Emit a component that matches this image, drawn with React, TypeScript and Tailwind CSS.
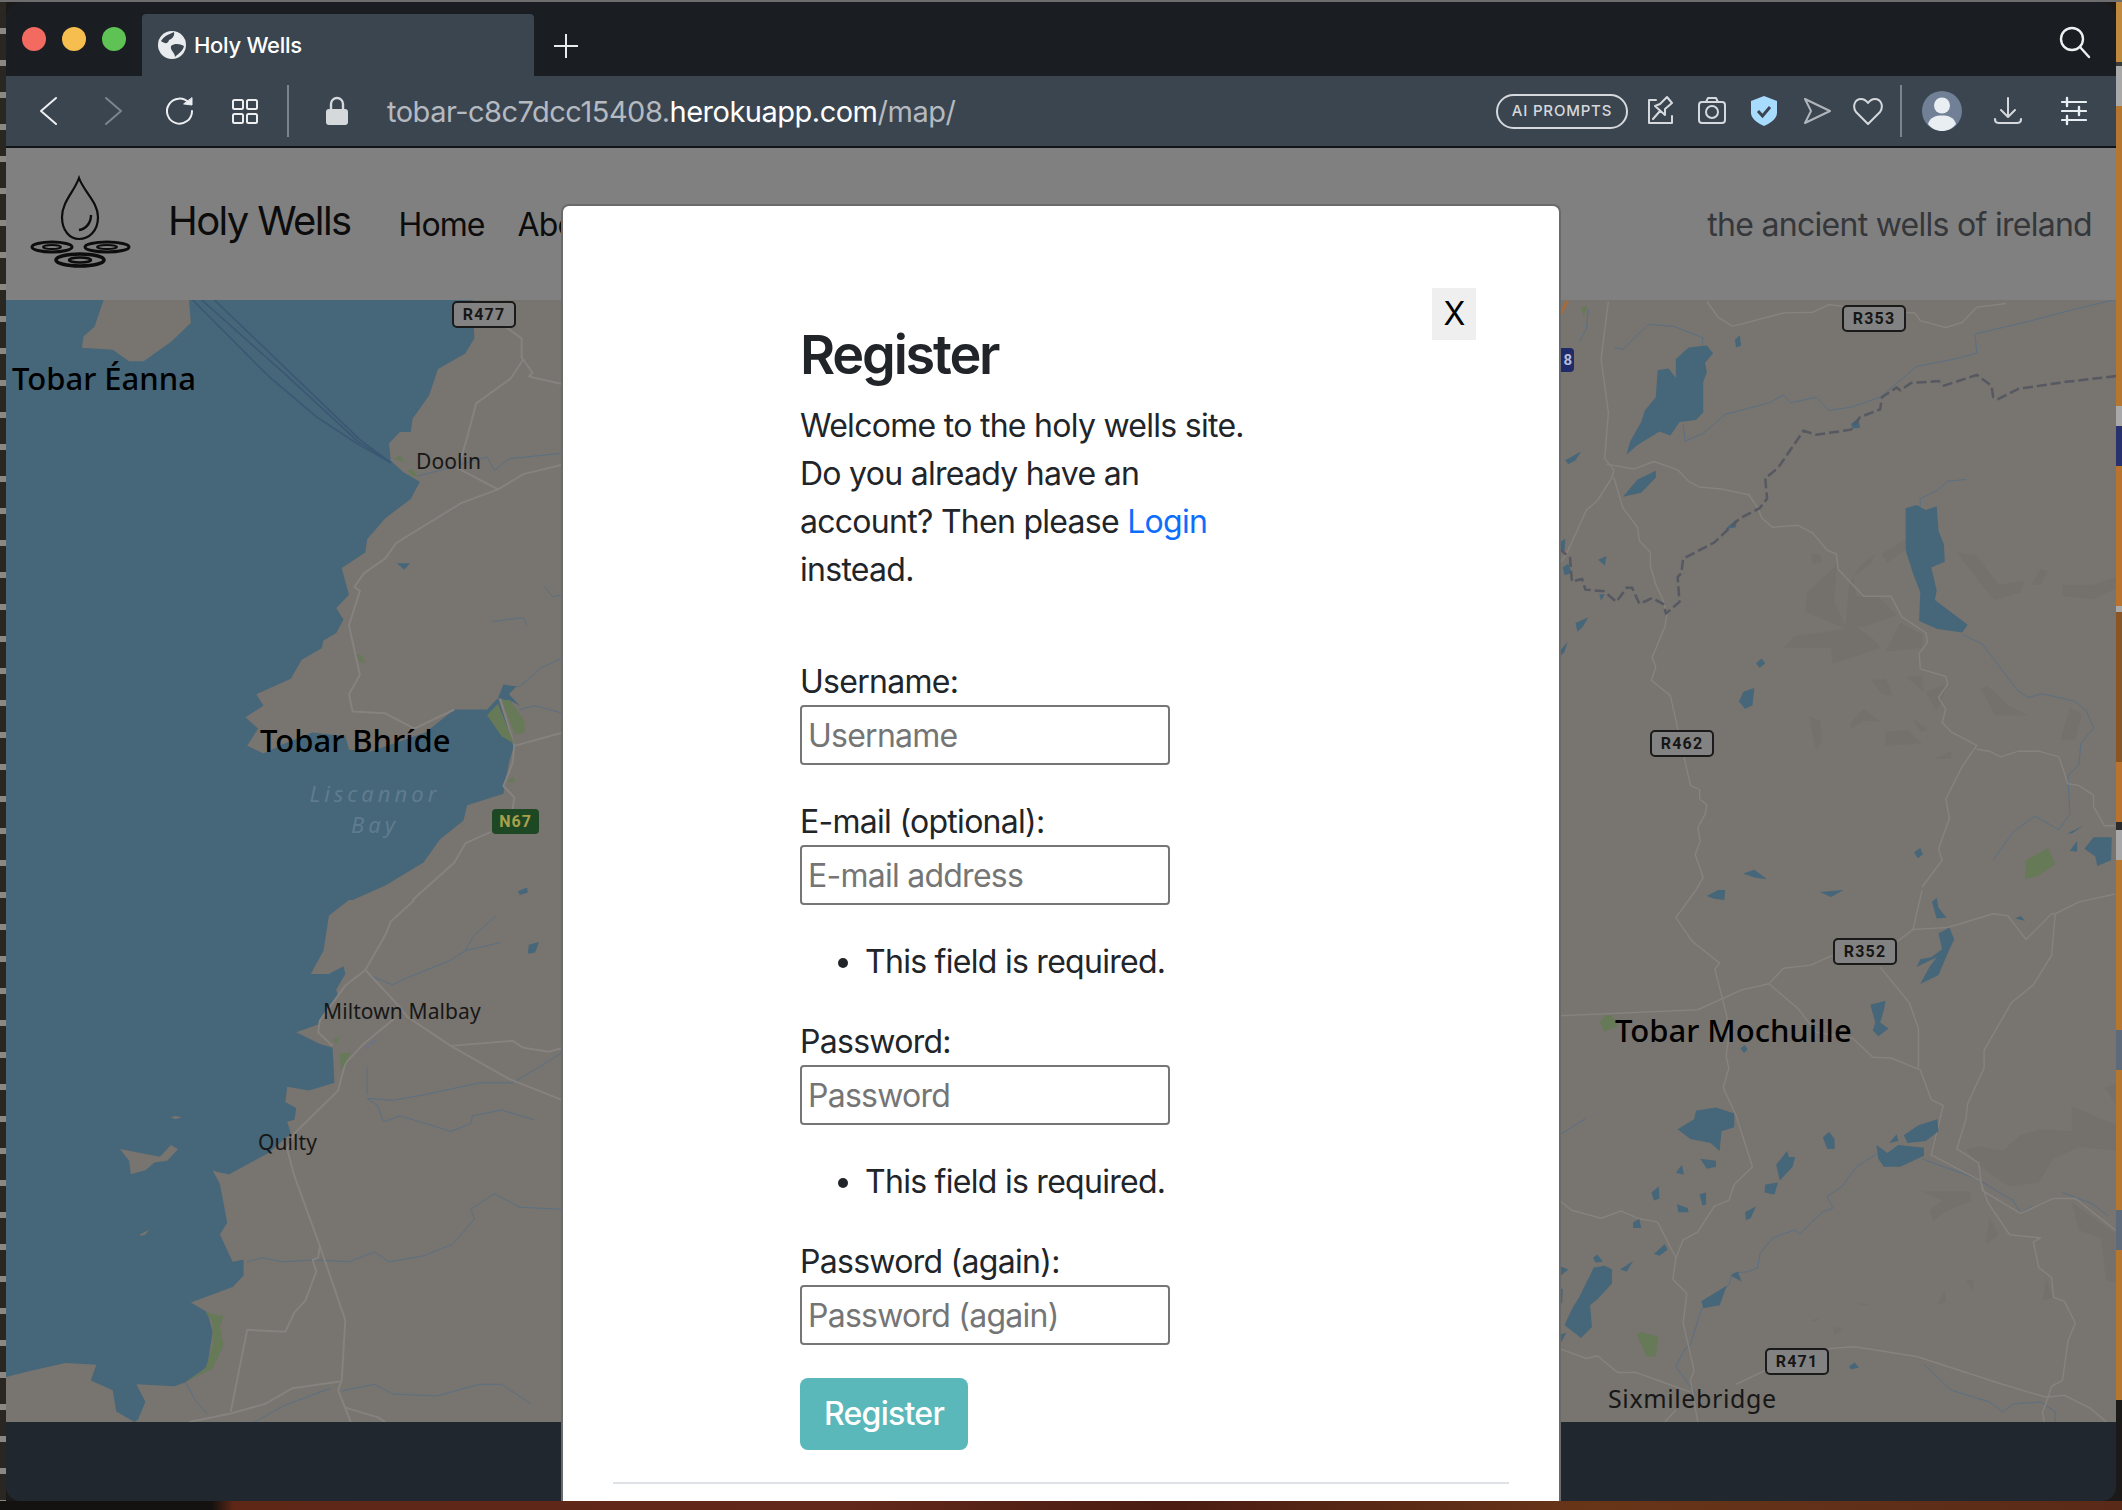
import type { ReactNode } from "react";

const SANS = "font-['Inter','Liberation_Sans',sans-serif]";

// map shapes are traced in crop coordinates, each group below scales one crop back to the page
const waterNorth =
  "0,0 1300,0 1305,100 1280,140 1205,180 1180,250 1135,310 1130,345 1100,345 1070,375 1075,420 1110,450 1155,475 1130,520 1060,570 1010,625 1005,660 940,700 960,770 925,805 945,835 925,870 890,890 885,910 830,940 800,990 705,1030 725,1060 675,1090 710,1120 680,1165 725,1185 780,1160 860,1130 950,1140 960,1175 1020,1180 1170,1130 1250,1070 1340,1070 1370,1040 1415,1160 1400,1210 1385,1290 1285,1320 1275,1360 1210,1410 1165,1470 1060,1530 970,1568 0,1568";
const waterSouth =
  "0,0 960,0 905,40 890,130 855,190 905,190 945,170 950,190 925,230 930,250 885,300 875,320 815,340 880,370 915,380 920,470 850,490 790,480 785,520 815,535 810,565 790,570 800,600 740,650 630,705 600,700 585,695 605,730 625,830 605,860 640,930 670,925 670,965 640,995 525,1035 570,1060 585,1110 570,1200 510,1240 480,1250 375,1245 400,1290 380,1335 370,1342 320,1315 310,1260 250,1235 265,1195 180,1190 85,1210 0,1230";

const northIslands = [
  "285,0 520,0 525,60 470,110 395,160 355,160 310,130 225,125 230,95 260,70",
];
const northLakes = [
  "1370,1040 1385,1005 1420,1010 1400,1030 1430,1060 1410,1050",
  "1092,688 1128,688 1112,705",
  "1425,1545 1450,1535 1452,1548 1430,1555",
];
const northGreens = [
  "1085,415 1100,405 1115,425",
  "1120,445 1135,442 1148,460 1135,460",
  "980,925 995,930 1005,950 990,945",
  "1340,1085 1370,1055 1415,1160 1380,1140",
  "1380,1045 1402,1045 1443,1100 1443,1130 1417,1135",
  "1395,1260 1410,1245 1418,1258",
];
const northRoads = [
  "M1390,70 L1435,100 L1435,150 L1465,190 L1455,200 L1549,220",
  "M1440,155 L1405,205 L1310,270 L1285,360 L1260,440 L1370,495",
  "M1549,430 L1440,455 L1370,495 L1270,530 L1090,635 L1060,675 L1000,715 L975,750 L990,760 L960,850 L990,980 L960,1030 L970,1075 L1060,1080 L1140,1120 L1250,1070",
  "M1549,1130 L1415,1165 L1375,1040 M1415,1165 L1410,1210 L1385,1270 L1415,1300 L1410,1330",
  "M1350,1390 L1280,1420 L1250,1470 L1135,1568",
];
const northRivers = [
  "M1150,460 L1230,440 L1340,410 L1360,445 L1400,415 L1549,400",
  "M1355,840 L1440,830 L1450,850",
  "M1495,745 L1520,775 L1549,770",
  "M1549,935 L1490,960 L1430,1010 L1400,1010",
  "M1430,1070 L1470,1060 L1549,1080",
];
const ferryLines = [
  "M530,0 L740,200 L870,305 L990,380 L1075,425",
  "M555,0 L780,190 L985,370 L1075,425",
  "M590,0 L990,365 L1075,425",
];

const southIslands = [
  "330,640 440,660 470,630 490,640 460,670 425,675 400,695 360,705 355,670",
  "470,558 485,555 500,560 480,563",
  "385,860 410,848 400,860 388,864",
];
const southGreens = [
  "565,1060 615,1070 605,1095 615,1145 585,1205 510,1240 565,1205 585,1145 585,1085",
  "935,395 965,392 938,438",
  "915,360 935,350 925,370",
];
const southRoads = [
  "M1140,0 L1075,55 L1060,90 L1005,180 L1090,265 L1120,300 L1240,375 L1400,460 L1549,515",
  "M1005,180 L950,220 L880,310 L875,340 L915,375",
  "M1085,305 L1000,370 L950,420 L930,490 L810,600 L790,640 L810,710 L880,890 L950,1080 L940,1235 L930,1260 L965,1342",
  "M880,890 L875,920 L860,925 L870,955 L840,1030 L810,1060 L785,1110 L680,1105 L635,1315",
  "M1240,375 L1410,362 L1440,380 L1510,390 L1549,380",
  "M520,1342 L635,1320 L730,1295 L805,1255 L935,1238",
  "M950,1305 L1040,1330 L1060,1342",
];
const southRivers = [
  "M1365,40 L1305,90 L1280,130 L1240,155 L1120,200 L1080,218 L1020,195",
  "M1375,110 L1280,130",
  "M1549,390 L1500,420 L1410,470 L1320,470 L1170,500 L1080,515 L1010,510 L1040,530 L1055,570 L1100,555 L1190,580 L1240,595 L1295,575 L1300,555 L1380,540 L1470,565",
  "M1010,430 L1010,500",
  "M1545,795 L1430,790 L1360,755 L1295,795 L1305,820 L1245,885 L1165,915 L1070,930 L1030,905 L960,930 L870,925 L780,930 L720,920 L680,930",
  "M940,1262 L1030,1245 L1080,1270 L1200,1275 L1320,1245 L1380,1245 L1460,1295",
  "M510,1240 L540,1290 L570,1320",
  "M700,1342 L780,1300 L910,1255",
];

const eastHills = [
  "715,690 740,690 745,712 720,715",
  "700,840 705,790 785,720 780,815 810,880 820,770 850,720 890,690 880,715 830,750 840,800 900,800 950,850 860,880 840,880 820,890",
  "640,935 670,905 780,890 840,880 890,915 905,935 830,960 775,975 770,935",
  "920,945 960,870 1020,900 1020,935",
  "1115,685 1170,695 1230,770 1300,760 1290,790 1220,810 1190,780",
  "1320,770 1345,730 1365,735 1345,770",
  "1405,770 1490,770 1550,750 1550,780 1490,808 1405,800",
  "910,690 975,650 975,680 925,712",
  "880,1020 920,1015 940,1060 910,1055",
  "975,1010 1020,1008 1025,1050",
  "1030,1050 1090,1030 1060,1100",
  "1180,1040 1200,1035 1255,1085 1310,1112 1220,1112",
  "1425,1090 1458,1110 1440,1175 1400,1175",
  "710,1115 740,1125 745,1175 730,1205",
  "825,1130 860,1095 910,1130 860,1125 825,1148",
  "920,1155 980,1150 1020,1185 920,1190",
  "995,1120 1035,1150 1015,1155",
  "1055,1225 1100,1205 1100,1225",
];
const eastRoads = [
  "M160,30 L140,180 L160,320 L150,440 L175,470 L170,490 L130,550 L100,575 L45,690 L30,710",
  "M175,490 L200,570 L240,620 L245,655 L275,685 L275,720 L290,770 L310,810 L320,850 L315,880 L280,960 L290,985 L278,1020 L330,1060 L385,1295 L410,1305 L410,1330 L430,1345 L425,1370 L405,1405 L412,1440 L398,1475 L420,1535 L400,1568",
  "M155,455 L230,468 L285,448 L350,470 L380,500 L410,515 L470,520 L545,535 L570,570 L580,595 L610,620 L680,615 L720,635 L760,680 L785,690 L790,730 L860,800 L935,800 L965,855 L1030,895 L1035,920 L1012,950 L1015,990 L1085,1010 L1090,1030 L1065,1065 L1085,1095 L1075,1130 L1100,1155 L1170,1190 L1130,1245 L1085,1330 L1095,1380 L1065,1460 L1075,1490 L1020,1560",
  "M1170,1200 L1205,1205 L1235,1220 L1285,1205 L1340,1205 L1395,1220 L1420,1290 L1450,1295 L1490,1320 L1490,1350 L1520,1400 L1550,1400",
  "M430,30 L460,70 L500,95 L640,60 L720,58 L765,38 L900,55 L1000,60 L1015,80 L1085,98 L1130,85 L1170,45 L1250,35",
];
const eastRivers = [
  "M178,150 L200,155 L270,90 L340,95 L420,125 L415,150",
  "M365,350 L370,395 L420,375 L480,325 L600,295 L640,275 L660,295 L730,280 L765,315 L830,305 L905,280 L1005,200 L1110,180 L1170,165 L1165,115 L1300,85 L1440,50 L1550,25",
  "M1015,565 L1015,545 L1060,525 L1090,500 L1140,495",
  "M1130,900 L1185,925 L1280,1045 L1310,1065 L1350,1055 L1440,1075 L1470,1100 L1490,1145 L1455,1185 L1450,1240 L1420,1270 L1425,1370 L1395,1410 L1330,1375 L1270,1415 L1215,1490",
  "M105,50 L100,100 L80,135",
];
const countyBorder =
  "M1552,225 L1415,240 L1285,258 L1228,285 L1215,280 L1210,250 L1170,222 L1080,250 L1065,238 L990,243 L960,262 L950,255 L910,280 L905,312 L850,332 L825,365 L730,378 L695,368 L625,465 L590,492 L595,545 L575,570 L520,597 L450,660 L365,702 L360,740 L350,750 L355,815 L318,845 L310,820 L280,805 L245,820 L225,778 L210,778 L182,815 L148,787 L97,783 L88,755 L60,762 L55,700 L25,675";
const eastLakes = [
  "210,430 220,395 250,345 260,315 290,280 295,210 325,205 345,230 345,180 380,150 430,145 447,165 425,190 430,215 420,240 420,320 400,340 355,345 330,380 300,370 240,405",
  "975,570 1005,562 1030,575 1060,565 1065,630 1080,665 1082,710 1045,725 1060,785 1055,810 1145,875 1130,895 1060,885 1012,865 1015,790 995,740 975,680",
  "507,130 520,118 524,145 510,150",
  "42,445 85,422 70,445 50,455",
  "200,540 240,495 290,472 290,490 250,530",
  "132,705 155,695 150,720",
  "70,870 105,855 90,880 75,893",
  "25,945 48,920 40,945 25,960",
  "35,725 50,715 60,740 40,745",
  "25,660 42,650 40,680 25,685",
  "480,625 510,600 510,620",
  "825,350 845,335 850,360 830,362",
  "135,795 150,795 140,812",
  "565,975 580,963 590,975 575,988",
  "518,1075 530,1050 560,1040 555,1085 535,1095",
  "998,1470 1015,1458 1022,1475 1008,1485",
  "530,1525 560,1515 595,1540 560,1535",
  "1418,1420 1462,1400 1430,1420",
  "1425,1465 1445,1440 1445,1468",
  "1465,1460 1490,1430 1540,1430 1538,1490 1500,1505 1495,1480",
];
const eastGreens = [
  "1305,1490 1365,1458 1385,1500 1340,1530 1302,1540",
  "85,45 103,42 92,70",
];

const lowerHills = [
  "1140,655 1180,648 1240,660 1290,620 1340,605 1430,610 1430,548 1568,600 1568,660 1450,650 1380,680 1340,740 1260,750 1210,720 1170,690",
  "1520,500 1550,490 1550,540",
  "1430,790 1550,870 1550,990 1525,990 1510,880 1450,860",
  "1020,762 1150,762 1155,785 1090,810 1050,835 1040,810 1075,785",
  "1195,890 1205,830 1230,870 1200,895",
  "1350,1040 1360,985 1380,1030",
  "1060,1050 1082,1012 1085,1040",
  "1140,985 1160,985 1160,1015",
  "840,1045 875,1048 850,1050",
  "710,1092 740,1080 730,1090",
  "775,1105 805,1110 780,1125",
];
const lowerRoads = [
  "M400,0 L345,70 L390,130 L465,185 L452,200 L485,320 L490,370 L483,420 L490,450 L475,500 L510,570 L555,700 L505,745 L490,785 L450,800 L405,865 L365,885 L345,930 L337,985 L375,1020 L365,1095 L395,1215 L385,1240 L405,1345",
  "M25,318 L405,303 L525,253 L600,237 L640,198 L715,190 L775,165",
  "M600,237 L680,300 L730,360 L830,375 L885,423 L935,425 L1015,455 L1045,530 L1078,545 L1045,670 L1180,735 L1200,790 L1260,872 L1345,880 L1325,890 L1340,955 L1375,980 L1380,1030 L1410,1040 L1440,1095 L1420,1140 L1405,1240 L1375,1255 L1365,1285 L1350,1320 L1355,1345",
  "M945,135 L995,100 L1020,0",
  "M995,100 L1090,95 L1215,60 L1255,65 L1305,125 L1375,60 L1385,60 L1375,165 L1325,240 L1265,285 L1190,405 L1190,450 L1145,540 L1140,580 L1115,655 L1175,690 L1185,760 L1290,818 L1380,780 L1440,780 L1550,860",
  "M905,195 L985,285 L1010,350 L1010,450",
  "M1385,60 L1450,30 L1550,10",
  "M25,785 L60,810 L140,830 L195,812 L240,830 L295,840 L345,930",
  "M25,1160 L100,1185 L130,1178 L185,1220 L235,1220 L310,1245 L385,1270",
  "M510,1250 L590,1215 M760,1160 L835,1155 L1005,1180 L1240,1250 L1360,1283 L1410,1278 L1480,1310 L1525,1345",
  "M315,1345 L345,1315",
];
const lowerRivers = [
  "M25,620 L97,578",
  "M900,665 L840,700 L800,750 L760,775 L775,805 L745,815 L685,870 L670,860 L610,880 L575,920 L570,955 L545,965 L500,970 L490,1000 L415,1060 L385,1150 L370,1160 L345,1205 L400,1275",
  "M1020,680 L1170,730 L1240,770 L1270,785 L1290,818 L1320,800",
  "M1405,765 L1490,795 L1530,825",
  "M1025,1200 L1100,1265 L1205,1295 L1240,1320 L1270,1300 L1345,1295 L1385,1320 L1385,1345",
];
const lowerLakes = [
  "350,605 395,580 400,558 455,550 505,565 505,600 470,610 465,660 440,640 385,630",
  "412,680 455,685 455,700 430,705",
  "345,715 362,695 367,720",
  "278,765 298,750 300,780 285,785",
  "410,770 428,765 428,795 418,798",
  "348,795 378,805 380,815 352,815",
  "228,840 245,832 250,855 228,855",
  "285,920 315,895 322,910 300,925",
  "535,815 565,800 550,830 537,835",
  "590,745 625,740 615,770 588,765",
  "620,695 650,660 655,675 672,675 665,700 630,735",
  "748,625 765,612 780,630 780,655 760,655",
  "895,645 925,665 955,645 1025,652 1025,672 960,700 915,700 900,680",
  "970,620 1010,595 1062,580 1065,610 1030,635 980,640",
  "930,640 950,618 955,635",
  "415,1040 485,1000 465,1050 420,1058",
  "495,975 515,965 525,990",
  "80,1030 120,955 150,950 170,960 170,995 130,1035 110,1050 115,1105 85,1133 40,1100 60,1060",
  "25,950 50,960 30,975",
  "25,1005 35,1010 33,1045 25,1045",
  "25,1125 45,1120 30,1145",
  "118,930 130,922 145,940 125,942",
  "192,960 228,938 210,965",
  "820,1205 835,1195 847,1208 825,1212",
  "430,15 460,0 480,0 478,25 450,22",
  "740,5 805,0 770,18",
  "1047,30 1060,20 1065,45 1087,70 1060,72",
  "1065,110 1095,95 1108,125 1095,150 1065,215 1015,238 1040,195 1060,170 1005,195 1015,175 1045,170 1075,150",
  "878,290 920,280 915,305 905,335 928,350 900,370 885,355 892,335",
  "522,400 533,392 542,403 532,412",
  "1275,72 1290,66 1302,78",
];
const lowerGreens = [
  "137,335 150,318 170,316 185,345 150,358",
  "238,1125 250,1118 297,1130 290,1180 265,1180",
];

function Shapes({ points, fill }: { points: string[]; fill: string }) {
  return (
    <>
      {points.map((p) => (
        <polygon key={p} points={p} fill={fill} />
      ))}
    </>
  );
}

function Lines({ paths, stroke, width }: { paths: string[]; stroke: string; width: number }) {
  return (
    <>
      {paths.map((d) => (
        <path
          key={d}
          d={d}
          fill="none"
          stroke={stroke}
          strokeWidth={width}
          strokeLinejoin="round"
          vectorEffect="non-scaling-stroke"
        />
      ))}
    </>
  );
}

const WATER = "#46667a";
const LAND = "#78746f";
const HILL = "#74716c";
const GREEN = "#667a58";
const ROAD = "#85827f";
const RIVER = "#5a7083";

function MapDrawing() {
  return (
    <svg width="2110" height="1122" viewBox="6 300 2110 1122" className="block">
      <rect x="6" y="300" width="2110" height="1122" fill={LAND} />
      <g transform="translate(0 300) scale(.3635 .3827)">
        <polygon points={waterNorth} fill={WATER} />
        <Shapes points={northIslands} fill={LAND} />
        <Lines paths={ferryLines} stroke="#3a5873" width={1.6} />
        <Lines paths={northRivers} stroke={RIVER} width={1} />
        <Lines paths={northRoads} stroke={ROAD} width={2} />
        <Shapes points={northLakes} fill={WATER} />
        <Shapes points={northGreens} fill={GREEN} />
      </g>
      <g transform="translate(0 900) scale(.3635 .389)">
        <polygon points={waterSouth} fill={WATER} />
        <Shapes points={southIslands} fill={LAND} />
        <Lines paths={southRivers} stroke={RIVER} width={1} />
        <Lines paths={southRoads} stroke={ROAD} width={2} />
        <polygon points="1455,115 1483,108 1472,135 1452,138" fill={WATER} />
        <Shapes points={southGreens} fill={GREEN} />
        <path d="M1005,380 L1035,358" stroke="#6f7480" strokeWidth="3" vectorEffect="non-scaling-stroke" />
      </g>
      <g transform="translate(1550 290) scale(.3648 .3827)">
        <Shapes points={eastHills} fill={HILL} />
        <Lines paths={eastRivers} stroke={RIVER} width={1} />
        <Lines paths={eastRoads} stroke={ROAD} width={1.5} />
        <Shapes points={eastLakes} fill={WATER} />
        <Shapes points={eastGreens} fill={GREEN} />
        <path
          d={countyBorder}
          fill="none"
          stroke="#565862"
          strokeWidth="2.5"
          strokeDasharray="10 4"
          vectorEffect="non-scaling-stroke"
        />
        <path d="M25,70 L48,28" stroke="#a46c3c" strokeWidth="3" vectorEffect="non-scaling-stroke" />
      </g>
      <g transform="translate(1550 890) scale(.3648 .3954)">
        <Shapes points={lowerHills} fill={HILL} />
        <Lines paths={lowerRivers} stroke={RIVER} width={1} />
        <Lines paths={lowerRoads} stroke={ROAD} width={1.5} />
        <Shapes points={lowerLakes} fill={WATER} />
        <Shapes points={lowerGreens} fill={GREEN} />
      </g>
    </svg>
  );
}

function RoadShield({ label, className }: { label: string; className: string }) {
  return (
    <div
      className={`absolute flex h-[27px] w-[64px] items-center justify-center rounded-[5px] border-2 border-[#1a1a1a] bg-[#828282] font-['Roboto',sans-serif] text-[16px] font-bold tracking-[1.2px] text-[#161616] ${className}`}
    >
      {label}
    </div>
  );
}

function WellLabel({ children, className }: { children: ReactNode; className: string }) {
  return (
    <div
      className={`absolute whitespace-nowrap font-['Noto_Sans',sans-serif] text-[31px] font-medium leading-[40px] text-black ${className}`}
    >
      {children}
    </div>
  );
}

function TownLabel({ children, className }: { children: ReactNode; className: string }) {
  return (
    <div
      className={`absolute whitespace-nowrap font-['Noto_Sans',sans-serif] text-[21px] leading-[28px] tracking-[0.1px] text-[#171717] ${className}`}
    >
      {children}
    </div>
  );
}

function MapArea() {
  return (
    <div className="relative h-[1122px] overflow-hidden">
      <MapDrawing />
      <WellLabel className="left-[6px] top-[58px]">Tobar Éanna</WellLabel>
      <WellLabel className="left-[254px] top-[420px]">Tobar Bhríde</WellLabel>
      <WellLabel className="left-[1609px] top-[710px]">Tobar Mochuille</WellLabel>
      <TownLabel className="left-[410px] top-[147px]">Doolin</TownLabel>
      <TownLabel className="left-[317px] top-[697px]">Miltown Malbay</TownLabel>
      <TownLabel className="left-[252px] top-[828px]">Quilty</TownLabel>
      <TownLabel className="left-[1602px] top-[1084px] text-[25px] tracking-[0.6px]">Sixmilebridge</TownLabel>
      <TownLabel className="left-[1575px] top-[-24px] text-[25px]">Gort</TownLabel>
      <div className="absolute left-[303px] top-[478px] w-[132px] text-center font-['Noto_Sans',sans-serif] text-[22px] italic leading-[31px] tracking-[4px] text-[#5f7c8e]">
        Liscannor
        <br />
        Bay
      </div>
      <RoadShield label="R477" className="left-[446px] top-[1px]" />
      <RoadShield label="R353" className="left-[1836px] top-[5px]" />
      <RoadShield label="R462" className="left-[1644px] top-[430px]" />
      <RoadShield label="R352" className="left-[1827px] top-[638px]" />
      <RoadShield label="R471" className="left-[1759px] top-[1048px]" />
      <div className="absolute left-[486px] top-[509px] flex h-[25px] w-[47px] items-center justify-center rounded-[4px] bg-[#1e4824] font-['Roboto',sans-serif] text-[16px] font-bold tracking-[1px] text-[#a9a04c]">
        N67
      </div>
      <div className="absolute left-[1553px] top-[48px] flex h-[24px] w-[15px] items-center justify-end rounded-r-[4px] bg-[#202c6a] pr-[2px] font-['Roboto',sans-serif] text-[15px] font-bold text-[#b8bcd8]">
        8
      </div>
    </div>
  );
}

function Logo() {
  return (
    <svg width="120" height="110" viewBox="0 0 120 110" className="mb-[8px] shrink-0" fill="none" stroke="#0d0d0d">
      <path d="M59 13 C54 27 42 37 42 52 C42 66 50 74 59 74 C69 74 78 66 78 52 C78 37 64 27 59 13 Z" strokeWidth="2.2" />
      <path d="M71 50 C71 58 66 64 59 65" strokeWidth="2.4" />
      <ellipse cx="32" cy="82" rx="20" ry="5" strokeWidth="3" />
      <ellipse cx="32" cy="82" rx="9" ry="2" strokeWidth="2" />
      <ellipse cx="87" cy="82" rx="22" ry="5" strokeWidth="3" />
      <ellipse cx="87" cy="82" rx="10" ry="2" strokeWidth="2" />
      <ellipse cx="60" cy="95" rx="24" ry="6" strokeWidth="3.6" />
      <ellipse cx="60" cy="95" rx="11" ry="2.5" strokeWidth="2.6" />
    </svg>
  );
}

function SiteNav() {
  return (
    <nav className={`flex h-[152px] items-center bg-[#808080] pl-[14px] pr-[24px] text-black ${SANS}`}>
      <Logo />
      <span className="ml-[28px] mb-[6px] text-[40px] leading-[50px] tracking-[-1.6px] text-[#0c0c0c]">Holy Wells</span>
      <span className="ml-[48px] mt-[2px] text-[32px] leading-[48px] tracking-[-0.9px] text-[#0c0c0c]">Home</span>
      <span className="ml-[33px] mt-[2px] text-[32px] leading-[48px] tracking-[-0.9px] text-[#0c0c0c]">About</span>
      <span className="ml-auto mt-[2px] text-[32px] leading-[48px] tracking-[-0.72px] text-[#35373b]">
        the ancient wells of ireland
      </span>
    </nav>
  );
}

function Field({ label, placeholder, error }: { label: string; placeholder: string; error?: boolean }) {
  return (
    <div className={error ? "mb-[32px]" : "mb-[33px]"}>
      <label className="block h-[47px] leading-[48px]">{label}</label>
      <input
        placeholder={placeholder}
        className="block h-[60px] w-[370px] rounded-[4px] border-2 border-[#767676] bg-white px-[6px] text-[32px] tracking-[-0.75px] text-[#212529] outline-none placeholder:text-[#757575]"
      />
      {error ? <ul className="mt-[33px] list-disc pl-[65px] leading-[48px]"><li>This field is required.</li></ul> : null}
    </div>
  );
}

function RegisterModal() {
  return (
    <div
      className={`absolute bottom-0 left-[555px] top-[202px] w-[1000px] overflow-hidden rounded-t-[8px] border-2 border-b-0 border-[#6a6a6a] bg-white px-[50px] text-[32px] leading-[48px] tracking-[-0.72px] text-[#212529] ${SANS}`}
    >
      <button
        type="button"
        className="absolute right-[83px] top-[82px] flex h-[52px] w-[44px] items-center justify-center bg-[#efefef] text-[32px] text-black"
      >
        X
      </button>
      <div className="pl-[187px] pt-[115px]">
        <h2 className="mb-[14px] text-[54px] font-semibold leading-[67px] tracking-[-2.2px]">Register</h2>
        <p className="w-[450px]">
          Welcome to the holy wells site. Do you already have an account? Then please{" "}
          <a className="text-[#0d6efd]">Login</a> instead.
        </p>
        <form className="mt-[64px]">
          <Field label="Username:" placeholder="Username" />
          <Field label="E-mail (optional):" placeholder="E-mail address" error />
          <Field label="Password:" placeholder="Password" error />
          <Field label="Password (again):" placeholder="Password (again)" />
          <button type="button" className="block h-[72px] w-[168px] rounded-[8px] bg-[#5ab8bb] font-medium text-white">
            Register
          </button>
        </form>
      </div>
      <hr className="mt-[32px] border-t-2 border-[#dee2e6]" />
    </div>
  );
}

function TabBar() {
  return (
    <div className={`relative flex h-[74px] items-end bg-[#1a1d21] ${SANS}`}>
      <div className="flex h-[74px] w-[136px] items-center gap-[16px] pb-[1px] pl-[16px] pr-[10px]">
        <span className="h-[24px] w-[24px] rounded-full bg-[#f26a60]" />
        <span className="h-[24px] w-[24px] rounded-full bg-[#f6bd4f]" />
        <span className="h-[24px] w-[24px] rounded-full bg-[#5ec354]" />
      </div>
      <div className="flex h-[62px] w-[392px] items-center rounded-t-[4px] bg-[#3b4550] pl-[16px] text-[22px] font-medium tracking-[-0.3px] text-white">
        <svg width="28" height="28" viewBox="0 0 28 28" className="mr-[8px] shrink-0">
          <circle cx="14" cy="14" r="14" fill="#e9ecee" />
          <path d="M3 10 C7 4 12 3 16 1 C17 5 14 8 11 9 C10 13 7 13 3 10 Z" fill="#3b4550" />
          <path d="M13 15 C17 12 22 13 26 15 C25 20 20 23 17 26 C17 21 12 20 13 15 Z" fill="#3b4550" />
        </svg>
        Holy Wells
      </div>
      <svg width="26" height="26" viewBox="0 0 26 26" className="mb-[17px] ml-[19px]" stroke="#e8eaec" strokeWidth="2">
        <path d="M13 1 V25 M1 13 H25" />
      </svg>
      <svg width="34" height="34" viewBox="0 0 34 34" className="absolute right-[24px] top-[24px]" fill="none" stroke="#eef0f2" strokeWidth="2.4">
        <circle cx="14" cy="13" r="11" />
        <path d="M22 21 L31 31" strokeLinecap="round" />
      </svg>
    </div>
  );
}

function IconFrame({ width, children, className = "" }: { width: number; children: ReactNode; className?: string }) {
  return (
    <svg
      width={width}
      height="32"
      viewBox={`0 0 ${width} 32`}
      fill="none"
      stroke="#d5d9dd"
      strokeWidth="2"
      strokeLinecap="round"
      strokeLinejoin="round"
      className={`shrink-0 ${className}`}
    >
      {children}
    </svg>
  );
}

function Toolbar() {
  return (
    <div className={`flex h-[72px] items-center border-b-2 border-[#111417] bg-[#3b4550] pl-[34px] pr-[29px] ${SANS}`}>
      <IconFrame width={18}>
        <path d="M16 3 L1 16 L16 29" stroke="#eceef0" />
      </IconFrame>
      <IconFrame width={18} className="ml-[46px]">
        <path d="M2 3 L17 16 L2 29" stroke="#7d858c" />
      </IconFrame>
      <IconFrame width={28} className="ml-[44px]">
        <path d="M23 8 A12.5 12.5 0 1 0 26 16" stroke="#eceef0" />
        <path d="M18 9 L26 10 L26 3 Z" fill="#eceef0" stroke="#eceef0" strokeWidth="1" />
      </IconFrame>
      <IconFrame width={26} className="ml-[38px]">
        <g stroke="#eceef0">
          <rect x="1" y="5" width="10" height="9" rx="1.5" />
          <rect x="15" y="5" width="10" height="9" rx="1.5" />
          <rect x="1" y="19" width="10" height="9" rx="1.5" />
          <rect x="15" y="19" width="10" height="9" rx="1.5" />
        </g>
      </IconFrame>
      <span className="ml-[29px] h-[52px] w-[2px] bg-[#7c848b]" />
      <IconFrame width={24} className="ml-[36px]">
        <path d="M6 14 V9 A6 6 0 0 1 18 9 V14" stroke="#d6d9dc" strokeWidth="2.4" />
        <rect x="1" y="14" width="22" height="16" rx="3" fill="#d6d9dc" stroke="none" />
      </IconFrame>
      <div className="ml-[38px] mt-[2px] whitespace-nowrap text-[29px] tracking-[-0.5px] text-[#b4bac0]">
        tobar-c8c7dcc15408.<span className="text-white">herokuapp.com</span>/map/
      </div>
      <div className="ml-auto flex items-center">
        <span className="flex h-[35px] w-[132px] items-center justify-center rounded-full border-2 border-[#d5d9dd] text-[15px] font-medium tracking-[0.8px] text-[#d5d9dd]">
          AI PROMPTS
        </span>
        <IconFrame width={26} className="ml-[19px]">
          <path d="M9 5 H2 V28 H25 V21" />
          <path d="M13 9 L20 2 L25 8 L18 14 L18 20 L8 11 Z M13 16 L6 24" />
        </IconFrame>
        <IconFrame width={28} className="ml-[25px]">
          <rect x="1" y="7" width="26" height="21" rx="3" />
          <path d="M8 7 L10 3 H18 L20 7" />
          <circle cx="14" cy="17" r="6" />
        </IconFrame>
        <svg width="26" height="30" viewBox="0 0 26 30" className="ml-[25px] shrink-0">
          <path d="M13 0 L26 5 V17 C26 23 18 28 13 30 C8 28 0 23 0 17 V5 Z" fill="#a8dcff" />
          <path d="M7 15 L11.5 20 L19 11" fill="none" stroke="#3b4550" strokeWidth="3" />
        </svg>
        <IconFrame width={27} className="ml-[27px]">
          <path d="M1 4 L26 16 L1 28 L7 16 Z" stroke="#b0b5ba" />
        </IconFrame>
        <IconFrame width={30} className="ml-[22px]">
          <path d="M15 29 L3 17 C-1 11 2 4 8 4 C11 4 13.5 6 15 8 C16.5 6 19 4 22 4 C28 4 31 11 27 17 Z" />
        </IconFrame>
        <span className="ml-[17px] h-[52px] w-[2px] bg-[#7c848b]" />
        <svg width="40" height="40" viewBox="0 0 40 40" className="ml-[20px] shrink-0">
          <circle cx="20" cy="20" r="20" fill="#718096" />
          <circle cx="20" cy="14.5" r="8" fill="#e9eef3" />
          <path d="M6 33 C8 26 14 24.500 20 24.500 C26 24.500 32 26 34 33 C30 38 25 40 20 40 C15 40 10 38 6 33 Z" fill="#e9eef3" />
        </svg>
        <IconFrame width={28} className="ml-[32px]">
          <path d="M14 3 V21 M7 15 L14 22 L21 15" />
          <path d="M1 24 C1 28 3 28 5 28 H23 C25 28 27 28 27 24" strokeWidth="2.2" />
        </IconFrame>
        <IconFrame width={26} className="ml-[39px]">
          <path d="M1 7 H25 M1 16 H25 M1 25 H25" strokeWidth="2.2" stroke="#e9eef3" />
          <path d="M6 3 V11 M18 12 V20 M6 21 V29" strokeWidth="2.4" stroke="#e9eef3" />
        </IconFrame>
      </div>
    </div>
  );
}

const rightStrip = [
  ["h-[60px]", "bg-[#c08a3e]"],
  ["h-[4px]", "bg-[#3a3a3a]"],
  ["h-[40px]", "bg-[#a9a9a9]"],
  ["h-[300px]", "bg-[#b5772f]"],
  ["h-[20px]", "bg-[#a9a9a9]"],
  ["h-[40px]", "bg-[#28306e]"],
  ["h-[140px]", "bg-[#b9732e]"],
  ["h-[6px]", "bg-[#a9a9a9]"],
  ["h-[150px]", "bg-[#8a5524]"],
  ["h-[60px]", "bg-[#b9732e]"],
  ["h-[8px]", "bg-[#2b2b2b]"],
  ["h-[30px]", "bg-[#a9a9a9]"],
  ["h-[170px]", "bg-[#b5772f]"],
  ["h-[40px]", "bg-[#5e6a78]"],
  ["h-[140px]", "bg-[#b5772f]"],
  ["h-[40px]", "bg-[#5e6a78]"],
  ["h-[150px]", "bg-[#b5772f]"],
];

export default function App() {
  return (
    <div className="flex h-[1510px] w-[2122px] flex-col overflow-hidden bg-[#1c1a18]">
      <div className="h-[2px] shrink-0 bg-[#6d6d6d]" />
      <div className="flex h-[1499px] shrink-0">
        <div className="h-full w-[6px] shrink-0 bg-[#2a2622] bg-[repeating-linear-gradient(180deg,#2a2622_0px,#2a2622_26px,#8b8782_26px,#8b8782_32px)]" />
        <div className="relative h-full w-[2110px] shrink-0 overflow-hidden rounded-t-[16px] rounded-b-[14px]">
          <TabBar />
          <Toolbar />
          <SiteNav />
          <MapArea />
          <div className="h-[79px] bg-[#20272e]" />
          <RegisterModal />
        </div>
        <div className="flex h-full w-[6px] shrink-0 flex-col overflow-hidden">
          {rightStrip.map(([height, colour], i) => (
            <div key={i} className={`${height} ${colour} shrink-0`} />
          ))}
        </div>
      </div>
      <div className="h-[9px] shrink-0 bg-[linear-gradient(90deg,#141210_0%,#141210_10%,#5e2716_11%,#62281a_40%,#4a1c12_55%,#683518_75%,#5a2a18_100%)]" />
    </div>
  );
}
